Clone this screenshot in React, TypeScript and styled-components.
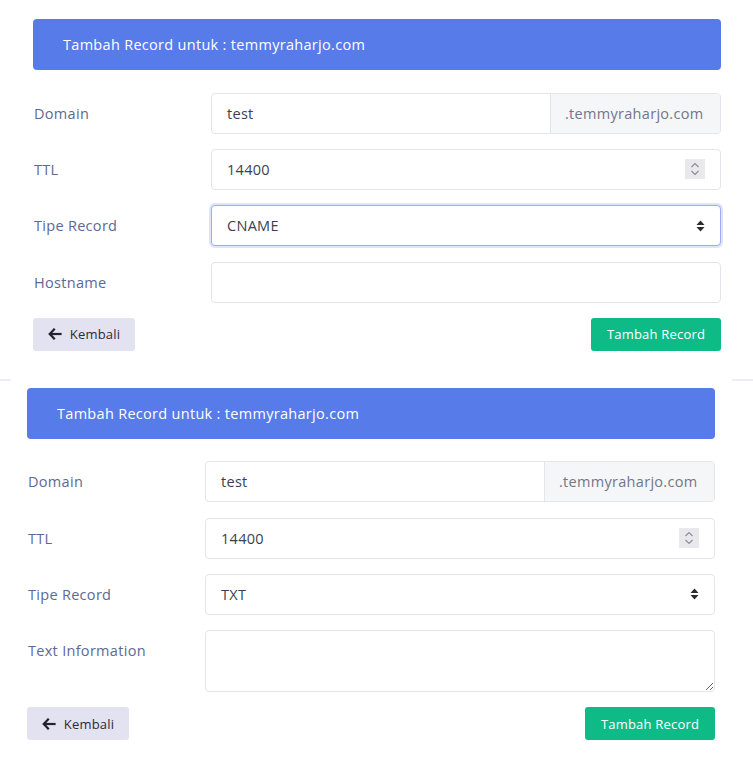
import * as React from "react"
import styled, {createGlobalStyle} from "styled-components"

const GlobalStyle = createGlobalStyle`
  body {
    margin: 0;
    background: #ffffff;
    font-family: "Open Sans", "Liberation Sans", sans-serif;
    letter-spacing: 0.3px;
  }
`

const Page = styled.div`
  padding-top: 19px;
  width: 753px;
`

const Section = styled.div<{ $left: number; $right: number }>`
  padding-left: ${p => p.$left}px;
  padding-right: ${p => p.$right}px;
  display: flex;
  flex-direction: column;
`

const Header = styled.div`
  height: 51px;
  background: #577be9;
  border-radius: 4px;
  color: #ffffff;
  font-size: 14.5px;
  display: flex;
  align-items: center;
  padding-left: 30px;
  margin-bottom: 22.5px;
`

const Form = styled.div`
  display: flex;
  flex-direction: column;
  gap: 15.4px;
`

const Row = styled.div`
  display: flex;
  align-items: flex-start;
`

const Label = styled.div`
  width: 178px;
  padding-left: 1px;
  box-sizing: border-box;
  line-height: 41px;
  font-size: 14.5px;
  color: #5d6993;
  flex-shrink: 0;
`

const Field = styled.div<{ $focus?: boolean }>`
  flex: 1;
  height: 41px;
  box-sizing: border-box;
  display: flex;
  align-items: center;
  border: 1px solid ${p => p.$focus ? "#9eabf1" : "#e3e5ec"};
  box-shadow: ${p => p.$focus ? "0 0 0 2px #dfe4fb" : "none"};
  border-radius: 4px;
  background: #ffffff;
  overflow: hidden;
`

const Value = styled.span`
  flex: 1;
  padding-left: 15px;
  font-size: 14.5px;
  color: #3b3f50;
`

const Addon = styled.div`
  width: 170px;
  height: 100%;
  box-sizing: border-box;
  border-left: 1px solid #e3e5ec;
  background: #f5f6f8;
  color: #717788;
  font-size: 14.5px;
  display: flex;
  align-items: center;
  padding-left: 14px;
`

const Spinner = styled.div`
  width: 20px;
  height: 20px;
  background: #e9e9ed;
  margin-right: 15px;
  display: flex;
  align-items: center;
  justify-content: center;
`

const Arrow = styled.div`
  margin-right: 15px;
  display: flex;
  align-items: center;
`

const TextArea = styled.textarea`
  flex: 1;
  height: 62px;
  box-sizing: border-box;
  border: 1px solid #e3e5ec;
  border-radius: 4px;
  font-family: inherit;
  font-size: 14.5px;
  outline: none;
  resize: vertical;
`

const Actions = styled.div`
  display: flex;
  justify-content: space-between;
  margin-top: 15px;
`

const Button = styled.button<{ $kind: "back" | "submit" }>`
  height: 33px;
  border: none;
  border-radius: 3px;
  font-family: inherit;
  letter-spacing: 0.2px;
  font-size: 13px;
  display: flex;
  align-items: center;
  gap: 8px;
  padding: 0;
  justify-content: center;
  width: ${p => p.$kind === "back" ? "102px" : "130px"};
  background: ${p => p.$kind === "back" ? "#e2e2f0" : "#0ebb87"};
  color: ${p => p.$kind === "back" ? "#2b2b38" : "#ffffff"};
`

const Divider = styled.div`
  display: flex;
  justify-content: space-between;
  margin-top: 28px;
  margin-bottom: 7px;
`

const Segment = styled.div<{ $w: number }>`
  width: ${p => p.$w}px;
  height: 2px;
  background: #eceef5;
`

const SpinIcon = () => (
    <svg width="10" height="16" viewBox="0 0 10 16" fill="none" stroke="#8e8e98" strokeWidth="1.2">
        <path d="M1.5 6 L5 2.5 L8.5 6"/>
        <path d="M1.5 10 L5 13.5 L8.5 10"/>
    </svg>
)

const SelectIcon = () => (
    <svg width="9" height="12" viewBox="0 0 9 12" fill="#2a2a33">
        <path d="M4.5 0.5 L8.5 5 L0.5 5 Z"/>
        <path d="M4.5 11.5 L8.5 7 L0.5 7 Z"/>
    </svg>
)

const BackIcon = () => (
    <svg width="14" height="12" viewBox="0 0 14 12" fill="none" stroke="#23232e" strokeWidth="2.2" strokeLinecap="square">
        <path d="M6 1.5 L1.8 6 L6 10.5"/>
        <path d="M2 6 L12.5 6"/>
    </svg>
)

type Props = { left: number; right: number; recordType: string; focus?: boolean; last: string; textArea?: boolean }

const RecordForm: React.FC<Props> = ({left, right, recordType, focus, last, textArea}) => (
    <Section $left={left} $right={right}>
        <Header>Tambah Record untuk : temmyraharjo.com</Header>
        <Form>
            <Row>
                <Label>Domain</Label>
                <Field>
                    <Value>test</Value>
                    <Addon>.temmyraharjo.com</Addon>
                </Field>
            </Row>
            <Row>
                <Label>TTL</Label>
                <Field>
                    <Value>14400</Value>
                    <Spinner><SpinIcon/></Spinner>
                </Field>
            </Row>
            <Row>
                <Label>Tipe Record</Label>
                <Field $focus={focus}>
                    <Value>{recordType}</Value>
                    <Arrow><SelectIcon/></Arrow>
                </Field>
            </Row>
            <Row>
                <Label>{last}</Label>
                {textArea ? <TextArea readOnly/> : <Field/>}
            </Row>
        </Form>
        <Actions>
            <Button $kind="back"><BackIcon/>Kembali</Button>
            <Button $kind="submit">Tambah Record</Button>
        </Actions>
    </Section>
)

const App: React.FC = () => {
    return (
        <Page>
            <GlobalStyle/>
            <RecordForm left={33} right={32} recordType="CNAME" focus last="Hostname"/>
            <Divider>
                <Segment $w={11}/>
                <Segment $w={21}/>
            </Divider>
            <RecordForm left={27} right={38} recordType="TXT" last="Text Information" textArea/>
        </Page>
    )
}

export default App
